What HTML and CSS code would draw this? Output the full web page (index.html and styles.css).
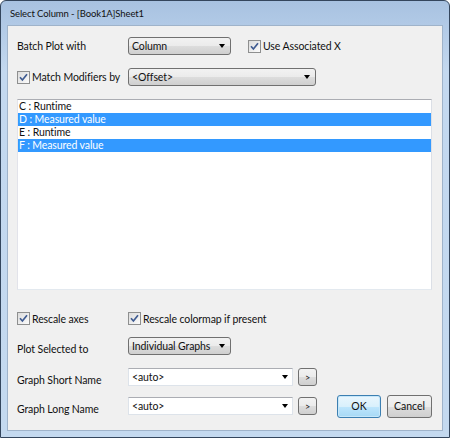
FILE: index.html
```html
<!DOCTYPE html>
<html lang="en">
<head>
  <meta charset="UTF-8" />
  <title>Select Column</title>
  <link rel="stylesheet" href="styles.css">
</head>
<body>
  <div class="window">
    <div class="titlebar">Select Column - [Book1A]Sheet1</div>

    <div class="client">
      <!-- batch options -->
      <div class="row">
        <span class="label">Batch Plot with</span>
        <div class="dropdown w-short"><span>Column</span><i class="arrow"></i></div>
        <label class="check check-assoc">
          <span class="box"><svg width="11" height="11" viewBox="0 0 11 11"><path d="M2 5.2 L4.4 8 L9 2.2" /></svg></span>
          Use Associated X
        </label>
      </div>

      <div class="row row-gap">
        <label class="check label">
          <span class="box"><svg width="11" height="11" viewBox="0 0 11 11"><path d="M2 5.2 L4.4 8 L9 2.2" /></svg></span>
          Match Modifiers by
        </label>
        <div class="dropdown w-long"><span>&lt;Offset&gt;</span><i class="arrow"></i></div>
      </div>

      <!-- column list -->
      <ul class="column-list">
        <li>C : Runtime</li>
        <li class="selected">D : Measured value</li>
        <li>E : Runtime</li>
        <li class="selected">F : Measured value</li>
      </ul>

      <div class="row row-checks">
        <label class="check label">
          <span class="box"><svg width="11" height="11" viewBox="0 0 11 11"><path d="M2 5.2 L4.4 8 L9 2.2" /></svg></span>
          Rescale axes
        </label>
        <label class="check">
          <span class="box"><svg width="11" height="11" viewBox="0 0 11 11"><path d="M2 5.2 L4.4 8 L9 2.2" /></svg></span>
          Rescale colormap if present
        </label>
      </div>

      <div class="row row-plot">
        <span class="label low">Plot Selected to</span>
        <div class="dropdown w-short"><span>Individual Graphs</span><i class="arrow"></i></div>
      </div>

      <div class="row row-gap">
        <span class="label low">Graph Short Name</span>
        <div class="combo"><span>&lt;auto&gt;</span><i class="arrow"></i></div>
        <button class="btn btn-more">&gt;</button>
      </div>

      <div class="row row-last">
        <span class="label low">Graph Long Name</span>
        <div class="combo"><span>&lt;auto&gt;</span><i class="arrow"></i></div>
        <button class="btn btn-more">&gt;</button>
        <button class="btn btn-ok">OK</button>
        <button class="btn btn-cancel">Cancel</button>
      </div>
    </div>
  </div>
</body>
</html>
```

FILE: styles.css
```css
body {
  margin: 0;
  background: #fff;
  font-family: Lato, "Liberation Sans", sans-serif;
  font-size: 10.5px;
  letter-spacing: -0.1px;
  color: #111;
}

/* window frame */
.window {
  width: 450px;
  height: 438px;
  box-sizing: border-box;
  border: 1px solid #34465d;
  border-radius: 6px 6px 0 0;
  background: linear-gradient(#a8c2e1, #c3d8ef 70px, #c4d9ef);
  padding: 0 6px 6px;
  display: flex;
  flex-direction: column;
}
.titlebar {
  height: 24px;
  line-height: 25px;
  padding-left: 3px;
  font-size: 9.5px;
  color: #111;
}
.client {
  flex: 1;
  background: #f0f0f0;
  border: 1px solid #9fb3ca;
  padding: 11px 10px 0 9px;
}

/* rows */
.row {
  display: flex;
  align-items: center;
  height: 18px;
}
.row-gap {
  margin-top: 13px;
}
.row-checks {
  margin-top: 22px;
  height: 13px;
}
.row-plot {
  margin-top: 12px;
}
.row-last {
  margin-top: 11px;
}
.label {
  width: 111px;
  flex: none;
}
.label.low {
  padding-top: 6px;
}

/* checkboxes */
.check {
  display: flex;
  align-items: center;
}
.check-assoc {
  margin-left: 17px;
}
.box {
  width: 13px;
  height: 13px;
  box-sizing: border-box;
  border: 1px solid #8e8f8f;
  background: linear-gradient(135deg, #dcdcdc, #fbfbfb);
  margin-right: 2px;
  display: flex;
  flex: none;
}
.box svg path {
  fill: none;
  stroke: #3f5b91;
  stroke-width: 1.7;
}

/* drop-down lists */
.dropdown {
  height: 18px;
  box-sizing: border-box;
  border: 1px solid #707070;
  border-radius: 3px;
  background: linear-gradient(#f2f2f2, #ebebeb 50%, #dddddd 50%, #cfcfcf);
  display: flex;
  align-items: center;
  padding-left: 3px;
  flex: none;
}
.w-short {
  width: 103px;
}
.w-long {
  width: 188px;
}
.arrow {
  margin-left: auto;
  margin-right: 5px;
  width: 0;
  height: 0;
  border-left: 3.5px solid transparent;
  border-right: 3.5px solid transparent;
  border-top: 4px solid #000;
}
.combo {
  width: 165px;
  height: 18px;
  box-sizing: border-box;
  border: 1px solid #dde3ea;
  border-top-color: #abadb3;
  background: #fff;
  display: flex;
  align-items: center;
  padding-left: 3px;
  flex: none;
}
.combo .arrow {
  margin-right: 4px;
}

/* list box */
.column-list {
  list-style: none;
  margin: 13px 0 0;
  padding: 0;
  height: 191px;
  box-sizing: border-box;
  border: 1px solid #828790;
  border-color: #abadb3 #dbdfe6 #e3e9ef #e2e3ea;
  background: #fff;
}
.column-list li {
  height: 13px;
  line-height: 13px;
  padding-left: 1px;
}
.column-list .selected {
  background: #3399ff;
  color: #fff;
}

/* buttons */
.btn {
  font: inherit;
  color: #111;
  box-sizing: border-box;
  border: 1px solid #707070;
  border-radius: 3px;
  background: linear-gradient(#f2f2f2, #ebebeb 50%, #dddddd 50%, #cfcfcf);
  padding: 0;
  flex: none;
}
.btn-more {
  width: 19px;
  height: 18px;
  margin-left: 5px;
  font-size: 9px;
}
.btn-ok {
  width: 44px;
  height: 23px;
  margin-left: 20px;
  border-color: #3c7fb1;
  background: linear-gradient(#eaf6fd, #d9f0fc 50%, #bee6fd 50%, #a7d9f5);
  box-shadow: inset 0 0 0 1px #c6e7fa;
}
.btn-cancel {
  width: 45px;
  height: 23px;
  margin-left: 6px;
}
```
